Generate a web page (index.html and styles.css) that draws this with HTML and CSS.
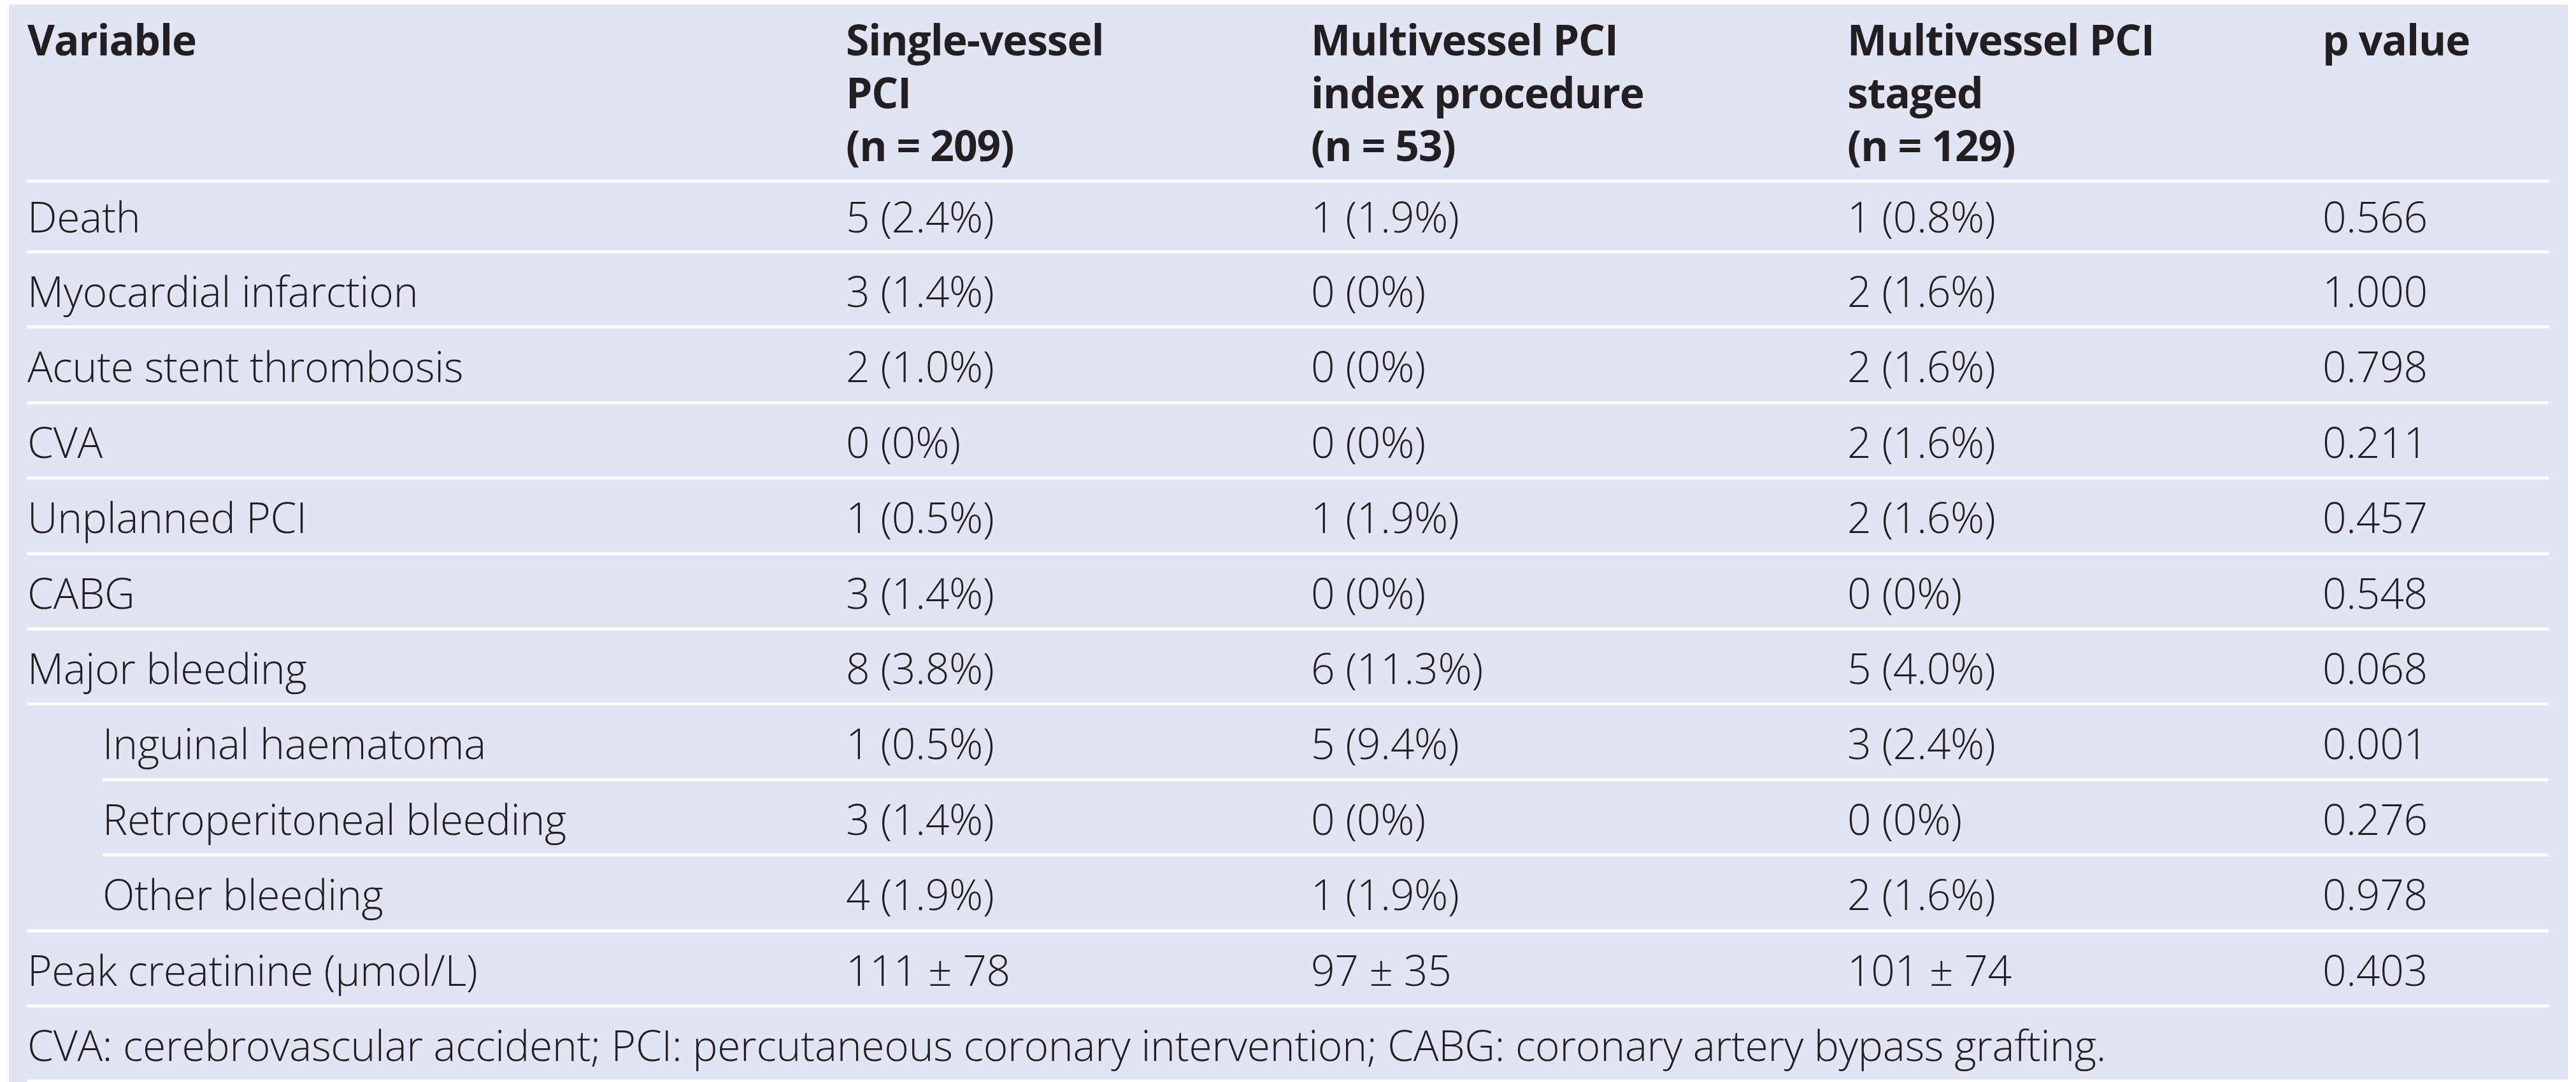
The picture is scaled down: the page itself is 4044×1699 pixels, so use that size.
FILE: index.html
```html
<!DOCTYPE html>
<html lang="en">
<head>
<meta charset="utf-8">
<title>Outcomes table</title>
<link rel="stylesheet" href="styles.css">
</head>
<body>
<div class="panel">
  <div class="row head">
    <div class="c">Variable</div>
    <div class="c">Single-vessel<br>PCI<br>(n = 209)</div>
    <div class="c">Multivessel PCI<br>index procedure<br>(n = 53)</div>
    <div class="c">Multivessel PCI<br>staged<br>(n = 129)</div>
    <div class="c">p value</div>
  </div>
  <div class="row first">
    <div class="c">Death</div><div class="c">5 (2.4%)</div><div class="c">1 (1.9%)</div><div class="c">1 (0.8%)</div><div class="c">0.566</div>
  </div>
  <div class="row">
    <div class="c">Myocardial infarction</div><div class="c">3 (1.4%)</div><div class="c">0 (0%)</div><div class="c">2 (1.6%)</div><div class="c">1.000</div>
  </div>
  <div class="row">
    <div class="c">Acute stent thrombosis</div><div class="c">2 (1.0%)</div><div class="c">0 (0%)</div><div class="c">2 (1.6%)</div><div class="c">0.798</div>
  </div>
  <div class="row">
    <div class="c">CVA</div><div class="c">0 (0%)</div><div class="c">0 (0%)</div><div class="c">2 (1.6%)</div><div class="c">0.211</div>
  </div>
  <div class="row">
    <div class="c">Unplanned PCI</div><div class="c">1 (0.5%)</div><div class="c">1 (1.9%)</div><div class="c">2 (1.6%)</div><div class="c">0.457</div>
  </div>
  <div class="row">
    <div class="c">CABG</div><div class="c">3 (1.4%)</div><div class="c">0 (0%)</div><div class="c">0 (0%)</div><div class="c">0.548</div>
  </div>
  <div class="row">
    <div class="c">Major bleeding</div><div class="c">8 (3.8%)</div><div class="c">6 (11.3%)</div><div class="c">5 (4.0%)</div><div class="c">0.068</div>
  </div>
  <div class="row sub">
    <div class="c">Inguinal haematoma</div><div class="c">1 (0.5%)</div><div class="c">5 (9.4%)</div><div class="c">3 (2.4%)</div><div class="c">0.001</div>
  </div>
  <div class="row sub">
    <div class="c">Retroperitoneal bleeding</div><div class="c">3 (1.4%)</div><div class="c">0 (0%)</div><div class="c">0 (0%)</div><div class="c">0.276</div>
  </div>
  <div class="row sub last-sub">
    <div class="c">Other bleeding</div><div class="c">4 (1.9%)</div><div class="c">1 (1.9%)</div><div class="c">2 (1.6%)</div><div class="c">0.978</div>
  </div>
  <div class="row">
    <div class="c">Peak creatinine (µmol/L)</div><div class="c">111 ± 78</div><div class="c">97 ± 35</div><div class="c">101 ± 74</div><div class="c">0.403</div>
  </div>
  <div class="note">CVA: cerebrovascular accident; PCI: percutaneous coronary intervention; CABG: coronary artery bypass grafting.</div>
</div>
</body>
</html>
```

FILE: styles.css
```css
html, body {
  margin: 0;
  padding: 0;
  background: #ffffff;
}

body {
  font-family: "Open Sans", "Noto Sans", sans-serif;
  color: #231f20;
}

.panel {
  margin: 7px 13px 0 14px;
  padding: 13px 30px 0 29px;
  background: #e0e4f3;
  font-weight: 300;
  font-size: 66px;
  line-height: 83px;
  letter-spacing: -0.3px;
}

.row {
  display: grid;
  grid-template-columns: 1285px 730px 842px 746px 1fr;
  padding: 17px 0 13.4px;
  border-bottom: 5px solid #ffffff;
  white-space: nowrap;
}

.row.head {
  padding: 0 0 13px;
  font-weight: 700;
  letter-spacing: -1.1px;
}

.row.first {
  padding: 11px 0 12px;
}

.row.sub {
  margin-left: 118px;
  grid-template-columns: 1167px 730px 842px 746px 1fr;
}

.row.sub.last-sub {
  margin-left: 0;
  grid-template-columns: 1285px 730px 842px 746px 1fr;
}

.row.sub.last-sub .c:first-child {
  padding-left: 118px;
}

.note {
  padding: 17px 0 13px;
  margin-right: -30px;
  border-bottom: 5px solid #ffffff;
  white-space: nowrap;
}
```
